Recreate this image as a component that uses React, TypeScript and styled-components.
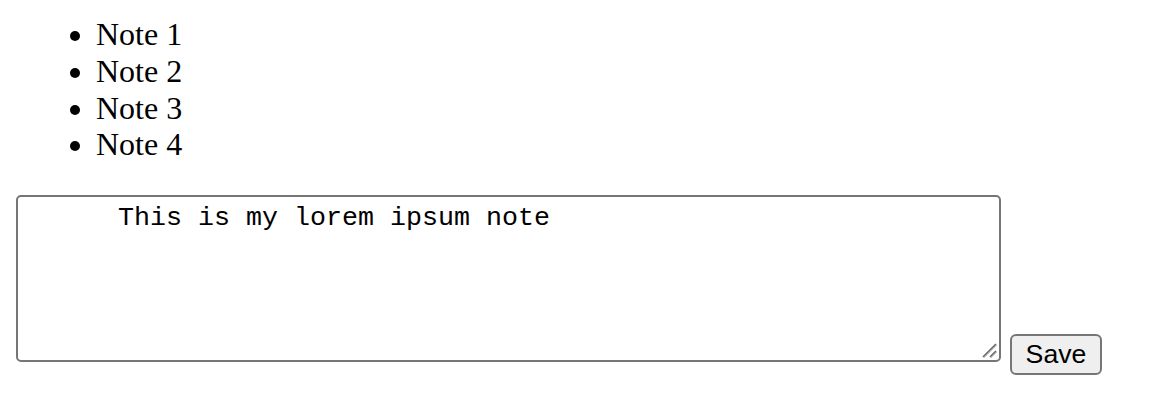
import styled, { createGlobalStyle } from 'styled-components';

const GlobalStyle = createGlobalStyle`
  html, body {
    margin: 0;
    padding: 0;
    background: #ffffff;
  }
`;

/** 페이지 전체 (원본은 2배 배율 스크린샷이라 값도 2배로) */
const Page = styled.div`
  padding: 0 16px;
  font-family: 'Liberation Serif', 'Times New Roman', serif;
  font-size: 32px;
  color: #000;
`;

const NoteList = styled.ul`
  margin: 0 0 32px;
  padding: 16px 0 0 80px;
  list-style: disc;
  line-height: 36.8px;
`;

const NoteItem = styled.li`
  margin: 0;
`;

const EditorRow = styled.div`
  display: flex;
  align-items: flex-start;
  gap: 9px;
`;

const AreaWrap = styled.div`
  position: relative;
  width: 985px;
  height: 167px;
`;

const NoteArea = styled.textarea`
  box-sizing: border-box;
  width: 100%;
  height: 100%;
  margin: 0;
  padding: 6px 4px 4px;
  border: 2px solid #767676;
  border-radius: 5px;
  resize: none;
  font-family: 'Liberation Mono', 'Courier New', monospace;
  font-size: 26.67px;
  line-height: 30.2px;
  color: #000;
  background: #fff;
  outline: none;
`;

const Grip = styled.svg`
  position: absolute;
  right: 3px;
  bottom: 3px;
  width: 17px;
  height: 17px;
  pointer-events: none;
`;

const SaveButton = styled.button`
  box-sizing: border-box;
  margin-top: 139px;
  width: 92px;
  height: 41px;
  padding: 0 12px;
  border: 2px solid #767676;
  border-radius: 6px;
  background: #efefef;
  font-family: 'Liberation Sans', Arial, sans-serif;
  font-size: 26.67px;
  color: #000;
`;

const notes = ['Note 1', 'Note 2', 'Note 3', 'Note 4'];

function App() {
  return (
    <Page>
      <GlobalStyle />
      <NoteList>
        {notes.map((n) => (
          <NoteItem key={n}>{n}</NoteItem>
        ))}
      </NoteList>
      <EditorRow>
        <AreaWrap>
          <NoteArea defaultValue="      This is my lorem ipsum note" spellCheck={false} />
          <Grip viewBox="0 0 17 17">
            <path d="M15 2 L2 15 M15 9 L9 15" stroke="#666" strokeWidth="1.6" />
            <path d="M16 3 L3 16 M16 10 L10 16" stroke="#c8c8c8" strokeWidth="1" />
          </Grip>
        </AreaWrap>
        <SaveButton>Save</SaveButton>
      </EditorRow>
    </Page>
  );
}

export default App;
